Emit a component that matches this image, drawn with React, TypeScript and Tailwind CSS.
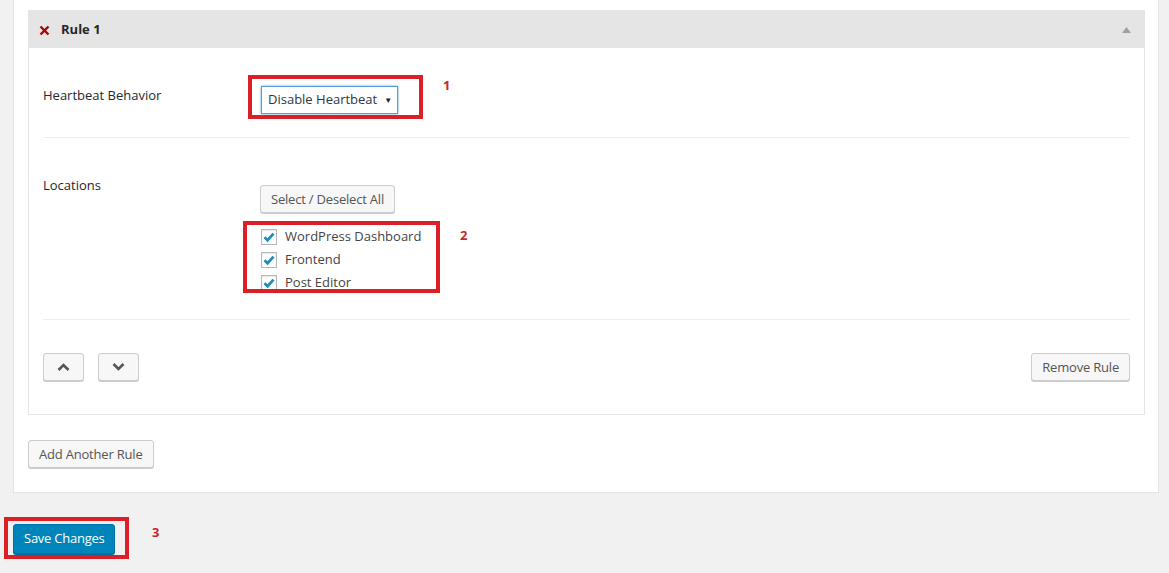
import React from "react";

const Btn = ({ children, className = "" }: { children: React.ReactNode; className?: string }) => (
  <button
    className={
      "h-[28px] whitespace-nowrap rounded-[3px] border border-[#cccccc] bg-[#f7f7f7] px-[10px] text-[13px] leading-[26px] tracking-[-0.2px] text-[#555555] shadow-[0_1px_0_#cccccc] " +
      className
    }
  >
    {children}
  </button>
);

const Check = ({ label }: { label: string }) => (
  <div className="flex h-[23px] items-center">
    <span className="flex h-[16px] w-[16px] items-center justify-center border border-[#b4b9be] bg-white shadow-[inset_0_1px_2px_rgba(0,0,0,0.1)]">
      <svg width="14" height="14" viewBox="0 0 14 14">
        <path d="M2.5 7.2 L5.6 10.2 L11.5 3.6" fill="none" stroke="#1e8cbe" strokeWidth="2.8" />
      </svg>
    </span>
    <span className="ml-[8px] text-[13px] leading-[19px] text-[#444444]">{label}</span>
  </div>
);

export default function App() {
  return (
    <div className="relative min-h-[573px] bg-[#f1f1f1] pb-[19px] font-['Open_Sans',_sans-serif] text-[#444444]">
      <div className="ml-[13px] w-[1146px] border-x border-b border-[#e5e5e5] bg-white px-[14px] pt-[10px] pb-[24px]">
        <div className="mr-[-1px] border border-[#e5e5e5] bg-white">
          <div className="flex h-[37px] items-center bg-[#e5e5e5] pl-[10px] pr-[13px]">
            <svg width="11" height="11" viewBox="0 0 11 11" className="mt-[1px]">
              <path d="M1.5 1.5 L9.5 9.5 M9.5 1.5 L1.5 9.5" stroke="#b00000" strokeWidth="2.4" />
            </svg>
            <span className="ml-[11px] text-[13px] font-bold text-[#23282d]">Rule 1</span>
            <span className="flex-1" />
            <svg width="9" height="6" viewBox="0 0 9 6">
              <path d="M4.5 0 L9 6 L0 6 Z" fill="#a0a0a0" />
            </svg>
          </div>
          <div className="px-[14px]">
            <div className="flex pt-[38px] pb-[23px]">
              <div className="w-[218px] text-[13px] leading-[19px] text-[#23282d]">Heartbeat Behavior</div>
              <div className="flex h-[28px] w-[137px] items-center whitespace-nowrap border border-[#5b9dd9] bg-white pl-[6px] text-[13px] text-[#32373c] shadow-[0_0_2px_rgba(30,140,190,0.8)]">
                <span>Disable Heartbeat</span>
                <span className="ml-[7px] text-[8px] text-[#222]">▼</span>
              </div>
            </div>
            <div className="h-px bg-[#eeeeee]" />
            <div className="flex pt-[38px] pb-[25px]">
              <div className="w-[217px] text-[13px] leading-[19px] text-[#23282d]">Locations</div>
              <div className="flex flex-col">
                <div className="mt-[9px]">
                  <Btn>Select / Deselect All</Btn>
                </div>
                <div className="mt-[12px] flex flex-col pl-[1px]">
                  <Check label="WordPress Dashboard" />
                  <Check label="Frontend" />
                  <Check label="Post Editor" />
                </div>
              </div>
            </div>
            <div className="h-px bg-[#eeeeee]" />
            <div className="flex items-center pt-[33px] pb-[33px]">
              <Btn className="flex w-[41px] items-center justify-center">
                <svg width="13" height="8" viewBox="0 0 13 8">
                  <path d="M1.5 7 L6.5 2 L11.5 7" fill="none" stroke="#555" strokeWidth="2.6" />
                </svg>
              </Btn>
              <Btn className="ml-[14px] flex w-[41px] items-center justify-center">
                <svg width="13" height="8" viewBox="0 0 13 8">
                  <path d="M1.5 1 L6.5 6 L11.5 1" fill="none" stroke="#555" strokeWidth="2.6" />
                </svg>
              </Btn>
              <span className="flex-1" />
              <Btn>Remove Rule</Btn>
            </div>
          </div>
        </div>
        <div className="mt-[25px]">
          <Btn>Add Another Rule</Btn>
        </div>
      </div>
      <div className="ml-[13px] mt-[31px]">
        <button className="h-[30px] rounded-[3px] border border-[#0073aa] bg-[#0085ba] px-[10px] text-[13px] tracking-[-0.25px] text-white shadow-[0_1px_0_#006799]">
          Save Changes
        </button>
      </div>

      <div className="pointer-events-none absolute left-[248px] top-[75px] h-[44px] w-[175px] border-[4px] border-[#dc1f26]" />
      <div className="pointer-events-none absolute left-[243px] top-[221px] h-[72px] w-[197px] border-[4px] border-[#dc1f26]" />
      <div className="pointer-events-none absolute left-[4px] top-[517px] h-[42px] w-[125px] border-[4px] border-[#dc1f26]" />
      <span className="absolute left-[443px] top-[76px] text-[13px] font-bold text-[#c8262d]">1</span>
      <span className="absolute left-[460px] top-[226px] text-[13px] font-bold text-[#c8262d]">2</span>
      <span className="absolute left-[152px] top-[523px] text-[13px] font-bold text-[#c8262d]">3</span>
    </div>
  );
}
